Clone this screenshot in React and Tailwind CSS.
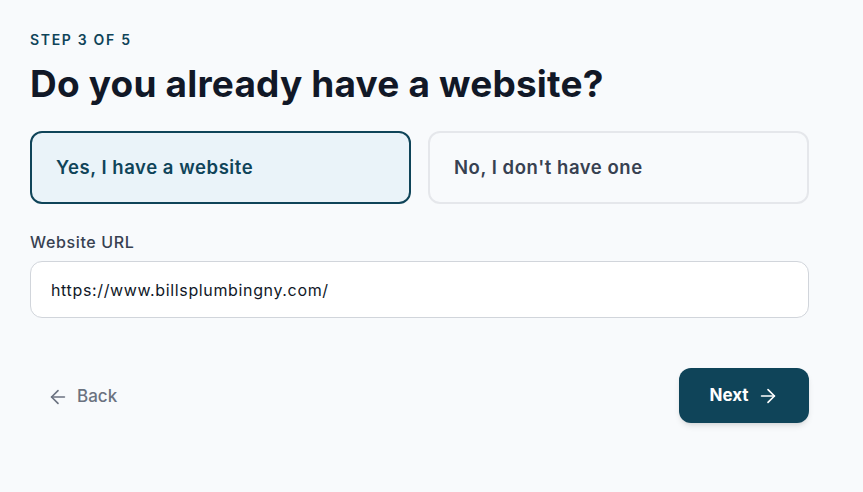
import React, { useState } from 'react';
import { ArrowLeft, ArrowRight } from 'lucide-react';

const App = () => {
  const [hasSite, setHasSite] = useState(true);
  const [url, setUrl] = useState('https://www.billsplumbingny.com/');

  const cardClass = (active) =>
    active
      ? 'flex-1 h-[73px] rounded-xl border-2 border-[#0f4459] bg-[#eaf3f9] text-[#0f4459] text-left px-6 text-[18.5px] font-semibold tracking-[0.03em]'
      : 'flex-1 h-[73px] rounded-xl border-2 border-[#e5e7eb] bg-[#f8fafc] text-[#374151] text-left px-6 text-[18.5px] font-semibold tracking-[0.03em]';

  return (
    <div
      className="min-h-screen w-full bg-[#f8fafc]"
      style={{ fontFamily: 'Inter, "Noto Sans", sans-serif' }}
    >
      <div className="w-[779px] ml-[30px] pt-[32px]">
        <p className="text-[14px] font-semibold tracking-[0.12em] uppercase text-[#0f4459] leading-4">
          Step 3 of 5
        </p>
        <h1 className="mt-[13px] text-[37px] font-bold text-[#111827] leading-[46px] tracking-[0.005em]">
          Do you already have a website?
        </h1>

        <div className="mt-[24px] flex gap-[17px]">
          <button type="button" onClick={() => setHasSite(true)} className={cardClass(hasSite)}>
            Yes, I have a website
          </button>
          <button type="button" onClick={() => setHasSite(false)} className={cardClass(!hasSite)}>
            No, I don't have one
          </button>
        </div>

        <label className="block mt-[28px] text-[16px] font-medium text-[#374151] leading-5 tracking-[0.04em]">
          Website URL
        </label>
        <input
          type="text"
          value={url}
          onChange={(e) => setUrl(e.target.value)}
          className="mt-[9px] w-full h-[57px] rounded-xl border border-[#d1d5db] bg-white px-5 text-[16px] text-[#111827] tracking-[0.04em] outline-none"
        />

        <div className="mt-[50px] flex items-center justify-between">
          <button
            type="button"
            className="flex items-center gap-[8px] ml-[17px] pt-[2px] text-[17px] font-medium text-[#6b7280]"
          >
            <ArrowLeft size={22} strokeWidth={1.8} />
            Back
          </button>
          <button
            type="button"
            className="flex items-center justify-center gap-[8px] w-[130px] h-[55px] rounded-xl bg-[#0f4459] text-white text-[17px] font-bold shadow-md"
          >
            Next
            <ArrowRight size={22} strokeWidth={1.8} />
          </button>
        </div>
      </div>
    </div>
  );
};

export default App;
